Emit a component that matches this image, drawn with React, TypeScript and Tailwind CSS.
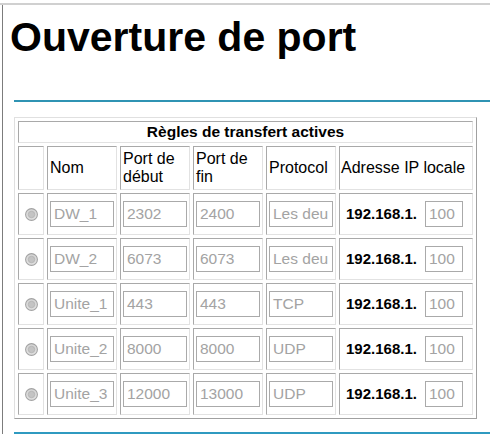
import React from "react";

const cell =
  "border border-t-[#a9a9a9] border-l-[#a9a9a9] border-r-[#e2e2e2] border-b-[#e2e2e2]";

function Radio() {
  return (
    <svg width="13" height="13" viewBox="0 0 13 13">
      <defs>
        <radialGradient id="rg" cx="50%" cy="45%" r="60%">
          <stop offset="0%" stopColor="#bdbdbd" />
          <stop offset="55%" stopColor="#d6d6d6" />
          <stop offset="100%" stopColor="#efefef" />
        </radialGradient>
      </defs>
      <circle cx="6.5" cy="6.5" r="5.9" fill="url(#rg)" stroke="#a2a2a2" strokeWidth="1.1" />
      <circle cx="6.5" cy="6.5" r="3.2" fill="#c4c4c4" stroke="#b4b4b4" strokeWidth="0.8" />
    </svg>
  );
}

function Field({ value, w = "w-[64px]" }: { value: string; w?: string }) {
  return (
    <div
      className={`${w} h-[26px] border border-[#aaaaaa] bg-white text-[#a3a3a3] text-[15.5px] leading-[24px] pl-[3px] overflow-hidden whitespace-nowrap`}
    >
      {value}
    </div>
  );
}

const rows = [
  { nom: "DW_1", d: "2302", f: "2400", p: "Les deu" },
  { nom: "DW_2", d: "6073", f: "6073", p: "Les deu" },
  { nom: "Unite_1", d: "443", f: "443", p: "TCP" },
  { nom: "Unite_2", d: "8000", f: "8000", p: "UDP" },
  { nom: "Unite_3", d: "12000", f: "13000", p: "UDP" },
];

export default function App() {
  return (
    <div className="w-[500px] h-[434px] bg-white overflow-hidden pt-[3px] text-black font-['Liberation_Sans',Arial,sans-serif]">
      <div className="w-[490px] h-[2px] bg-[#d0d0d0]" />
      <div className="ml-[2px] w-[488px] h-[429px] border-l border-[#7c7c7c] flex flex-col">
        <h1 className="mt-[12px] ml-[7px] text-[41px] leading-none font-bold">Ouverture de port</h1>
        <div className="mt-[42px] ml-[11px] w-[476px] h-[2px] bg-[#2f93b3]" />
        <div className="mt-[15px] ml-[11px] w-[463px] grid grid-cols-[26px_70px_70px_70px_70px_134px] grid-rows-[22px_44px_repeat(5,42px)] gap-[3px] p-[3px] border border-t-[#e0e0e0] border-l-[#e0e0e0] border-r-[#a0a0a0] border-b-[#a0a0a0]">
          <div className={`${cell} col-span-6 flex items-center justify-center font-bold text-[15.5px]`}>
            Règles de transfert actives
          </div>
          <div className={cell} />
          <div className={`${cell} flex items-center pl-[2px] text-[16px] leading-[18px]`}>Nom</div>
          <div className={`${cell} flex items-center pl-[2px] text-[16px] leading-[18px]`}>
            Port de début
          </div>
          <div className={`${cell} flex items-center pl-[2px] text-[16px] leading-[18px]`}>
            Port de fin
          </div>
          <div className={`${cell} flex items-center pl-[2px] text-[16px] leading-[18px]`}>Protocol</div>
          <div className={`${cell} flex items-center pl-[1px] text-[16px] leading-[18px] whitespace-nowrap`}>
            Adresse IP locale
          </div>
          {rows.map((r) => (
            <React.Fragment key={r.nom}>
              <div className={`${cell} flex items-center justify-center`}>
                <Radio />
              </div>
              <div className={`${cell} flex items-center justify-center`}>
                <Field value={r.nom} />
              </div>
              <div className={`${cell} flex items-center justify-center`}>
                <Field value={r.d} />
              </div>
              <div className={`${cell} flex items-center justify-center`}>
                <Field value={r.f} />
              </div>
              <div className={`${cell} flex items-center justify-center`}>
                <Field value={r.p} />
              </div>
              <div className={`${cell} flex items-center pl-[6px] gap-[8px]`}>
                <span className="font-bold text-[15px]">192.168.1.</span>
                <Field value="100" w="w-[38px]" />
              </div>
            </React.Fragment>
          ))}
        </div>
        <div className="mt-[13px] ml-[11px] w-[476px] h-[2px] bg-[#2f9ac0]" />
      </div>
    </div>
  );
}
